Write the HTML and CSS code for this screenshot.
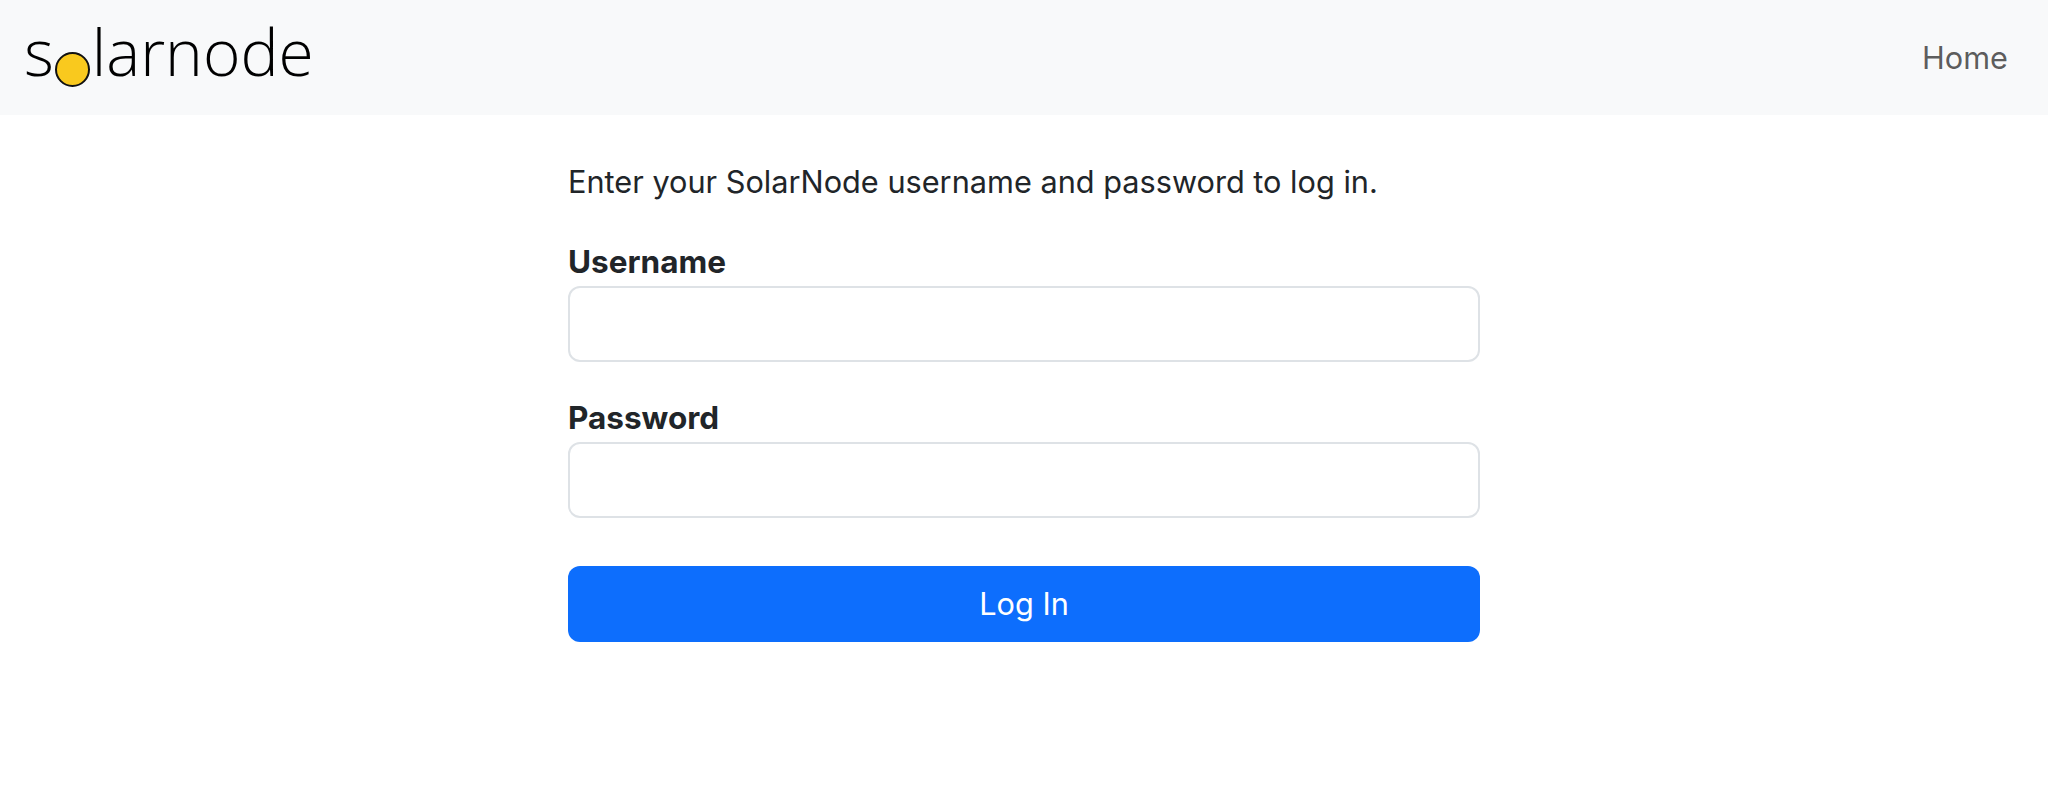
FILE: index.html
```html
<!DOCTYPE html>
<html lang="en">
<head>
  <meta charset="UTF-8" />
  <meta name="viewport" content="width=device-width, initial-scale=1" />
  <title>SolarNode Login</title>
  <link rel="stylesheet" href="styles.css">
</head>
<body>

  <nav class="navbar">
    <a class="brand" href="#">s<span class="sun">o</span>larnode</a>
    <a class="nav-link" href="#">Home</a>
  </nav>

  <main class="login">
    <p class="intro">Enter your SolarNode username and password to log in.</p>
    <form>
      <div class="field">
        <label for="username">Username</label>
        <input id="username" type="text">
      </div>
      <div class="field">
        <label for="password">Password</label>
        <input id="password" type="password">
      </div>
      <button class="btn" type="submit">Log In</button>
    </form>
  </main>

</body>
</html>
```

FILE: styles.css
```css
body {
  margin: 0;
  background: white;
  color: #212529;
  font-family: Inter, "Liberation Sans", sans-serif;
  font-size: 30.7px;
  line-height: 48px;
}

.navbar {
  display: flex;
  align-items: center;
  justify-content: space-between;
  height: 115px;
  padding: 0 40px 0 24px;
  background: #f8f9fa;
}

.brand {
  margin-bottom: 8px;
  color: #000;
  font-family: "Open Sans", sans-serif;
  font-size: 64px;
  font-weight: 300;
  line-height: 1;
  text-decoration: none;
}

.sun {
  display: inline-block;
  width: 35px;
  height: 35px;
  margin: 0 2px 0 1px;
  border: 2px solid #111;
  border-radius: 50%;
  box-sizing: border-box;
  background: #f9c91e;
  color: transparent;
  font-size: 20px;
  line-height: 31px;
  text-align: center;
  vertical-align: -1px;
}

.nav-link {
  color: rgba(0,0,0,0.65);
  text-decoration: none;
}

.login {
  width: 912px;
  margin: 0 auto;
  padding-top: 43px;
}

.intro {
  margin: 0 0 32px;
}

.field {
  margin-bottom: 32px;
}

.field label {
  display: block;
  font-size: 31.5px;
  font-weight: 700;
}

.field input {
  display: block;
  width: 100%;
  height: 76px;
  box-sizing: border-box;
  border: 2px solid #dee2e6;
  border-radius: 12px;
  background: white;
}

.btn {
  display: block;
  width: 100%;
  height: 76px;
  margin-top: 48px;
  border: none;
  border-radius: 12px;
  background: #0d6efd;
  color: white;
  font: inherit;
}
```
